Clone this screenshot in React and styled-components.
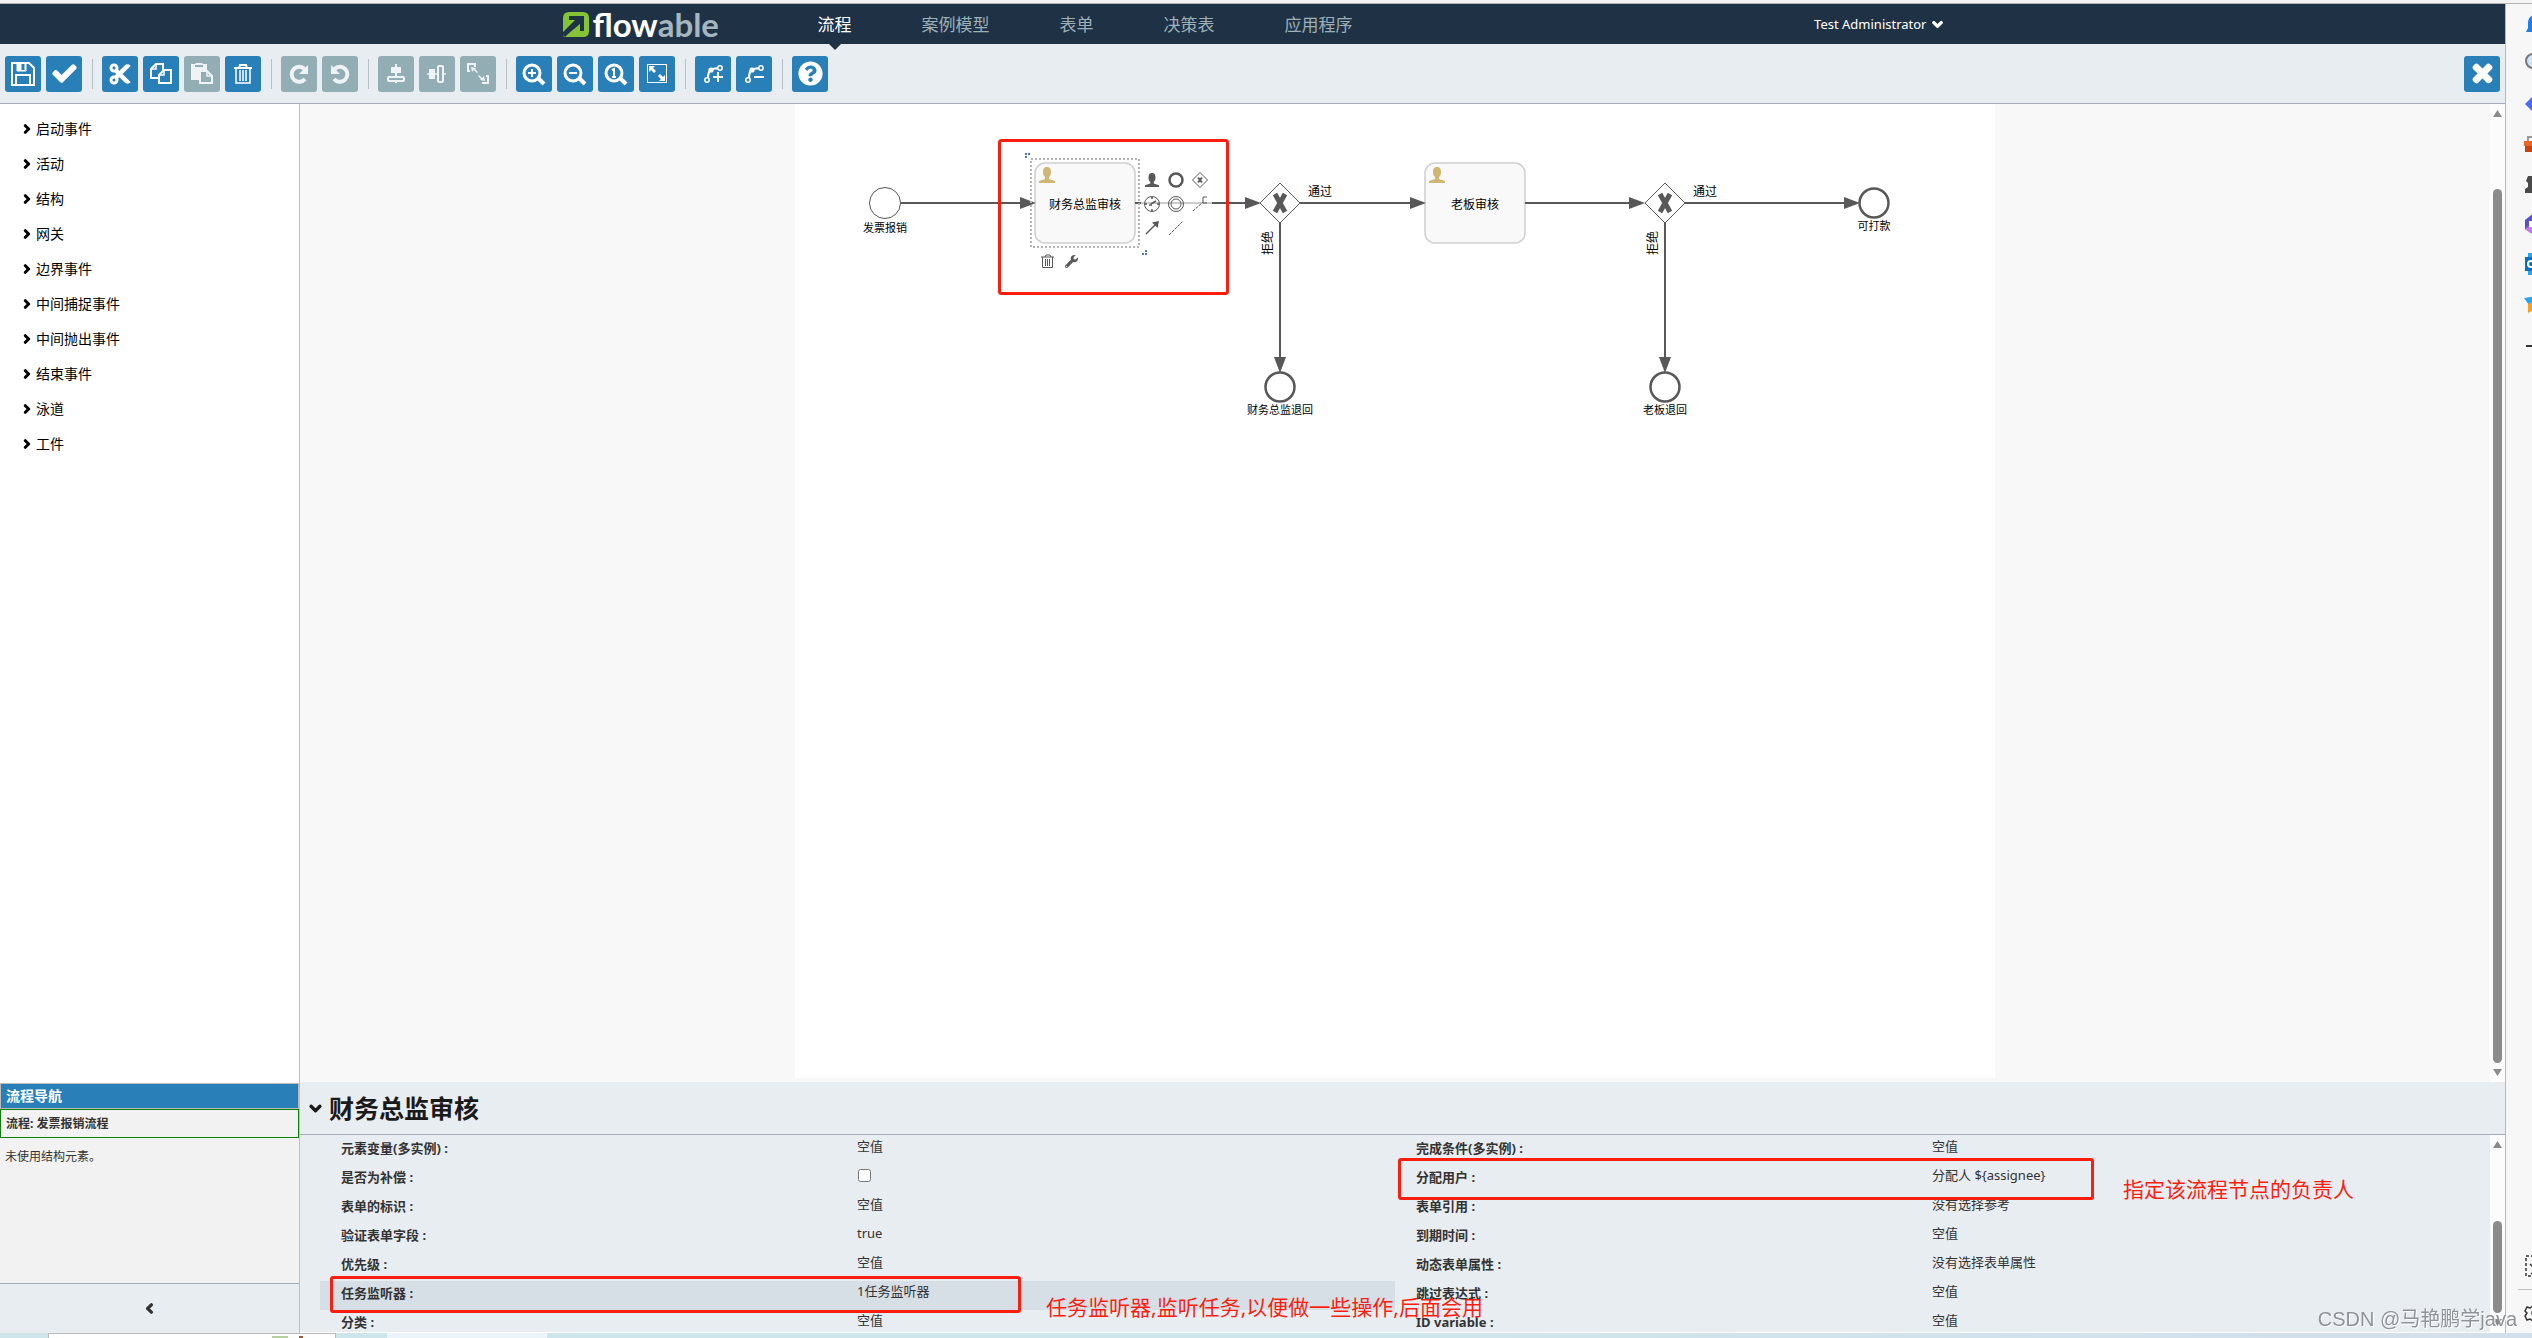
//LIBRARIES
import React from 'react';
import styled, { createGlobalStyle } from 'styled-components';
import {
  FaCheck,
  FaChevronDown,
  FaChevronLeft,
  FaChevronRight,
  FaCut,
  FaQuestionCircle,
  FaTimes,
  FaWrench,
} from 'react-icons/fa';

const GlobalStyle = createGlobalStyle`
  * {
    box-sizing: border-box;
  }

  body {
    margin: 0;
    overflow: hidden;
    color: #333;
    font-family: "Noto Sans", "Noto Sans CJK SC", sans-serif;
    font-size: 14px;
  }

  button {
    border: 0;
    padding: 0;
    background: none;
    color: inherit;
    font: inherit;
    cursor: pointer;
  }

  svg {
    display: block;
    flex: none;
    overflow: visible;
  }
`;

const Screen = styled.div`
  display: flex;
  flex-direction: column;
  height: 100vh;
  background: #f7f7f7;
`;

const WindowTop = styled.div`
  height: 4px;
  flex: none;
  background: #f3f3f3;
  border-bottom: 1px solid #b4b4b4;
`;

const Window = styled.div`
  display: flex;
  flex: 1;
  min-height: 0;
`;

const Editor = styled.div`
  display: flex;
  flex-direction: column;
  flex: 1;
  min-width: 0;
`;

/* header */
const Header = styled.header`
  height: 40px;
  flex: none;
  background: #1f3245;
`;

const HeaderInner = styled.div`
  display: flex;
  align-items: center;
  max-width: 1380px;
  height: 100%;
  margin: 0 auto;
`;

const Logo = styled.a`
  display: flex;
  align-items: center;
  gap: 4px;
  width: 220px;
  color: #fff;
  font-family: Lato, "Liberation Sans", sans-serif;
  font-size: 33px;
  font-weight: 700;
  line-height: 32px;
  text-decoration: none;

  em {
    color: #a4b6bf;
    font-style: normal;
  }
`;

const Nav = styled.nav`
  display: flex;
  flex: 1;
  height: 100%;
`;

const NavLink = styled.a`
  position: relative;
  padding: 0 35px;
  color: ${(props) => (props.$active ? '#fff' : '#9db0b9')};
  font-size: 17px;
  line-height: 42px;
  text-decoration: none;

  &::after {
    content: "";
    display: ${(props) => (props.$active ? 'block' : 'none')};
    position: absolute;
    top: 100%;
    left: calc(50% - 6px);
    border: 6px solid transparent;
    border-top-color: #1f3245;
    border-bottom: 0;
  }
`;

const UserMenu = styled.button`
  display: flex;
  align-items: center;
  gap: 5px;
  color: #fff;
  font-size: 13px;
`;

/* toolbar */
const Toolbar = styled.div`
  display: flex;
  align-items: center;
  gap: 5px;
  height: 60px;
  flex: none;
  padding: 0 5px;
  background: #e8edf1;
  border-bottom: 1px solid #a4acb9;
`;

const ToolButton = styled.button`
  display: flex;
  align-items: center;
  justify-content: center;
  width: 36px;
  height: 36px;
  border-radius: 3px;
  background: ${(props) => (props.disabled ? '#93adb4' : '#2980b9')};
  color: ${(props) => (props.disabled ? '#eef3f5' : '#fff')};
`;

const ToolDivider = styled.span`
  width: 1px;
  height: 30px;
  margin: 0 4px 0 5px;
  background: #b9c1c8;
`;

const Spacer = styled.span`
  flex: 1;
`;

/* columns */
const Workspace = styled.div`
  display: flex;
  flex: 1;
  min-height: 0;
`;

const Sidebar = styled.aside`
  display: flex;
  flex-direction: column;
  width: 300px;
  flex: none;
  background: #fff;
  border-right: 1px solid #c0c0c4;
`;

const Palette = styled.ul`
  flex: 1;
  margin: 0;
  padding: 7px 0 0 22px;
  list-style: none;
`;

const PaletteItem = styled.button`
  display: flex;
  align-items: center;
  gap: 4px;
  height: 35px;
  color: #000;
  line-height: 18px;
`;

const Navigator = styled.section`
  height: 200px;
  background: #f2f2f2;
  color: #333;
  font-size: 12px;
`;

const NavigatorTitle = styled.h2`
  height: 26px;
  margin: 0;
  padding: 0 5px;
  border: 1px solid #bbb;
  background: #2980b9;
  color: #fff;
  font-size: 14px;
  line-height: 24px;
`;

const NavigatorProcess = styled.div`
  height: 29px;
  padding: 0 5px;
  border: 1px solid #0a800a;
  font-weight: 700;
  line-height: 27px;
`;

const NavigatorText = styled.p`
  margin: 0;
  padding: 9px 5px;
  line-height: 20px;
`;

const CollapseButton = styled.button`
  display: flex;
  align-items: center;
  justify-content: center;
  height: 50px;
  border-top: 1px solid #a4acb9;
  background: #e8edf1;
`;

const Content = styled.main`
  display: flex;
  flex-direction: column;
  flex: 1;
  min-width: 0;
`;

const CanvasArea = styled.div`
  display: flex;
  flex: 1;
  min-height: 0;
  background: #f8f8f8;
`;

const CanvasScroll = styled.div`
  flex: 1;
  min-width: 0;
  padding-bottom: 4px;
`;

const Paper = styled.div`
  width: 1200px;
  height: 100%;
  margin: 0 auto;
  background: #fff;
`;

/* scrollbar */
const ScrollTrack = styled.div`
  display: flex;
  flex-direction: column;
  align-items: center;
  justify-content: space-between;
  width: 15px;
  flex: none;
  padding: 6px 0;
  background: #fcfcfc;
`;

const ScrollRail = styled.div`
  display: flex;
  flex: 1;
  padding: 5px 0;
  align-items: flex-end;
`;

const ScrollThumb = styled.div`
  width: 9px;
  height: ${(props) => props.$size};
  border-radius: 5px;
  background: #8b8b8b;
`;

/* properties */
const Properties = styled.section`
  display: flex;
  flex-direction: column;
  height: 251px;
  flex: none;
  background: #e8edf1;
  border-bottom: 1px solid #fff;
`;

const PropertiesHeader = styled.button`
  display: flex;
  align-items: center;
  gap: 7px;
  height: 53px;
  flex: none;
  padding-left: 9px;
  border-bottom: 1px solid #a4acb9;
  color: #1a1a1a;
`;

const PropertiesTitle = styled.h1`
  margin: 0;
  font-size: 25px;
  line-height: 32px;
`;

const PropertiesBody = styled.div`
  display: flex;
  flex: 1;
  min-height: 0;
`;

const PropertiesGrid = styled.div`
  position: relative;
  display: grid;
  grid-template-columns: 1fr 1fr;
  grid-auto-rows: 29px;
  flex: 1;
  height: 100%;
  padding: 1px 20px 0;
  overflow: hidden;
`;

const Property = styled.div`
  display: grid;
  grid-template-columns: 1fr 1fr;
  padding-left: 21px;
  background: ${(props) => (props.$selected ? '#d6dee6' : 'transparent')};
  font-size: 13px;
  line-height: 20px;
`;

const PropertyName = styled.label`
  padding-top: 2px;
  font-weight: 700;
`;

const PropertyValue = styled.span`
  margin-left: -11px;
`;

const PropertyCheckbox = styled.input`
  width: 13px;
  height: 13px;
  margin: 4px 0 0 -10px;
`;

/* red notes over the page */
const Highlight = styled.div`
  position: absolute;
  border: 3px solid #fd1e10;
  border-radius: 3px;
  pointer-events: none;
`;

const ListenerHighlight = styled(Highlight)`
  top: 141px;
  left: 30px;
  width: 691px;
  height: 37px;
`;

const AssigneeHighlight = styled(Highlight)`
  top: 23px;
  left: calc(50% + 3px);
  width: 696px;
  height: 42px;
`;

const Note = styled.span`
  position: absolute;
  color: #fd1e10;
  font-size: 21px;
  line-height: 30px;
  white-space: nowrap;
`;

const ListenerNote = styled(Note)`
  top: 157px;
  left: 746px;
`;

const AssigneeNote = styled(Note)`
  top: 39px;
  left: calc(50% + 728px);
`;

const Watermark = styled.div`
  position: fixed;
  right: 15px;
  bottom: 3px;
  color: #8f9498;
  font-family: "Liberation Sans", "Noto Sans CJK SC", sans-serif;
  font-size: 20px;
  line-height: 32px;
  text-shadow: 1px 1px 0 #fff;
  white-space: nowrap;
`;

/* browser side strip */
const BrowserBar = styled.aside`
  display: flex;
  flex-direction: column;
  width: 27px;
  flex: none;
  overflow: hidden;
  border-left: 1px solid #b8b8b8;
  background: #f7f7f7;
`;

const BrowserButton = styled.button`
  display: flex;
  align-items: center;
  height: 40px;
  flex: none;
  padding-left: 18px;
`;

const BrowserRule = styled.hr`
  width: 100%;
  margin: 3px 0 3px 12px;
  border: 0;
  border-top: 1px solid #c0c0c0;
`;

const Taskbar = styled.div`
  display: flex;
  height: 5px;
  flex: none;
  padding-left: 48px;
  background: linear-gradient(90deg, #cfe5ec 0%, #cfe5ec 55%, #d4dfec 100%);
`;

const TaskWindow = styled.div`
  display: flex;
  align-items: flex-end;
  justify-content: flex-end;
  gap: 11px;
  width: 288px;
  padding-right: 32px;
  border: 1px solid #bbb;
  border-bottom: 0;
  background: #fff;
`;

const TaskMark = styled.span`
  width: ${(props) => (props.$wide ? '16px' : '4px')};
  height: 2px;
  background: ${(props) => (props.$wide ? '#b5cfa0' : '#9a5c3c')};
`;

const TaskPreview = styled.div`
  width: 160px;
  margin-left: 51px;
  background: #eaf4f9;
`;

const ToolIcon = ({ children }) => (
  <svg width="36" height="36" viewBox="0 0 36 36" fill="none" stroke="currentColor" strokeWidth="2" aria-hidden="true">
    {children}
  </svg>
);

const Lens = ({ children }) => (
  <ToolIcon>
    <circle cx="16" cy="17" r="8" strokeWidth="3" />
    <path d="M22 22l6 6" strokeWidth="4" />
    {children}
  </ToolIcon>
);

const bendLine = (
  <>
    <circle cx="12" cy="24" r="2.2" strokeWidth="1.5" />
    <circle cx="25" cy="12" r="2.2" strokeWidth="1.5" />
    <circle cx="16" cy="14" r="2.6" fill="currentColor" stroke="none" />
    <path d="M13 22c0-4 1-7 3-8 2-2 5-1 7-2" />
  </>
);

const toolGroups = [
  [
    {
      label: '保存',
      icon: (
        <ToolIcon>
          <path d="M7 7h17l5 5v17H7z" />
          <path d="M11 29V19h14v10" />
          <path d="M12 7v8h9V7z" fill="currentColor" strokeWidth="1" />
          <path d="M18 8v6" stroke="#2980b9" strokeWidth="3" />
        </ToolIcon>
      ),
    },
    { label: '验证', icon: <FaCheck size={23} stroke="currentColor" strokeWidth="30" /> },
  ],
  [
    { label: '剪切', icon: <FaCut size={24} /> },
    {
      label: '复制',
      icon: (
        <ToolIcon>
          <path d="M16 22H8v-9l5-5h7v6" />
          <path d="M13 8v5H8" strokeWidth="1.5" />
          <path d="M16 27V19l5-5h7v13z" />
          <path d="M21 14v5h-5" strokeWidth="1.5" />
        </ToolIcon>
      ),
    },
    {
      label: '粘贴',
      disabled: true,
      icon: (
        <ToolIcon>
          <path d="M7 8h4l1-1h6l1 1h4v6h-7v10H7z" fill="currentColor" stroke="none" />
          <path d="M11 10h8" stroke="#93adb4" />
          <path d="M16 15h7l5 5v7H16z" fill="#93adb4" />
          <path d="M23 15v5h5" strokeWidth="1.5" />
        </ToolIcon>
      ),
    },
    {
      label: '删除',
      icon: (
        <ToolIcon>
          <path d="M9 12h18M14 12l1-3h6l1 3" />
          <path d="M11 12v15h14V12M15 14v11M18 14v11M21 14v11" strokeWidth="1.5" />
        </ToolIcon>
      ),
    },
  ],
  [
    {
      label: '重做',
      disabled: true,
      icon: (
        <ToolIcon>
          <path d="M24 23a7.5 7.5 0 1 1-.5-10" strokeWidth="4" />
          <path d="M27 9v9h-9z" fill="currentColor" stroke="none" />
        </ToolIcon>
      ),
    },
    {
      label: '撤销',
      disabled: true,
      icon: (
        <ToolIcon>
          <path d="M12 23a7.5 7.5 0 1 0 .5-10" strokeWidth="4" />
          <path d="M9 9v9h9z" fill="currentColor" stroke="none" />
        </ToolIcon>
      ),
    },
  ],
  [
    {
      label: '垂直对齐',
      disabled: true,
      icon: (
        <ToolIcon>
          <path d="M18 8v13M18 25v2" />
          <path d="M13 11h10v6H13z" fill="currentColor" stroke="none" />
          <rect x="10" y="21" width="16" height="4" rx="1" />
        </ToolIcon>
      ),
    },
    {
      label: '水平对齐',
      disabled: true,
      icon: (
        <ToolIcon>
          <path d="M8 18h11M24 18h3" strokeWidth="1.5" />
          <path d="M10 13h6v10h-6z" fill="currentColor" stroke="none" />
          <rect x="19" y="10" width="5" height="16" rx="1" />
        </ToolIcon>
      ),
    },
    {
      label: '相同大小',
      disabled: true,
      icon: (
        <ToolIcon>
          <path d="M10 15H8V8h7v3M22 27h6v-7h-2" />
          <path d="M11 11l5 1-1 1 3 3-1 1-3-3-2 2zM25 25l-5-1 1-1-3-3 1-1 3 3 2-2z" fill="currentColor" stroke="none" />
        </ToolIcon>
      ),
    },
  ],
  [
    { label: '放大', icon: <Lens><path d="M12 17h8M16 13v8" /></Lens> },
    { label: '缩小', icon: <Lens><path d="M12 17h8" /></Lens> },
    { label: '实际大小', icon: <Lens><path d="M14 14l2-1v8M14 21h4" /></Lens> },
    {
      label: '适应屏幕',
      icon: (
        <ToolIcon>
          <rect x="8.5" y="8.5" width="19" height="18" strokeWidth="1" />
          <path d="M10 10h6l-2 2 3 3-2 2-3-3-2 2zM26 25h-6l2-2-3-3 2-2 3 3 2-2z" fill="currentColor" stroke="none" />
        </ToolIcon>
      ),
    },
  ],
  [
    { label: '添加拐点', icon: <ToolIcon>{bendLine}<path d="M18 21h10M23 16v10" /></ToolIcon> },
    { label: '移除拐点', icon: <ToolIcon>{bendLine}<path d="M18 21h10" /></ToolIcon> },
  ],
  [{ label: '帮助', icon: <FaQuestionCircle size={25} /> }],
];

const navItems = ['流程', '案例模型', '表单', '决策表', '应用程序'];

const paletteItems = [
  '启动事件',
  '活动',
  '结构',
  '网关',
  '边界事件',
  '中间捕捉事件',
  '中间抛出事件',
  '结束事件',
  '泳道',
  '工件',
];

const properties = [
  { name: '元素变量(多实例)', value: '空值' },
  { name: '完成条件(多实例)', value: '空值' },
  { name: '是否为补偿', checkbox: true },
  { name: '分配用户', value: '分配人 ${assignee}' },
  { name: '表单的标识', value: '空值' },
  { name: '表单引用', value: '没有选择参考' },
  { name: '验证表单字段', value: 'true' },
  { name: '到期时间', value: '空值' },
  { name: '优先级', value: '空值' },
  { name: '动态表单属性', value: '没有选择表单属性' },
  { name: '任务监听器', value: '1任务监听器', selected: true },
  { name: '跳过表达式', value: '空值' },
  { name: '分类', value: '空值' },
  { name: 'ID variable', value: '空值' },
];

const browserIcons = [
  {
    label: '通知',
    icon: <path d="M12 3c-5 0-8 3-8 8v5l-2 4h20V11c0-5-4-8-10-8zM9 21h6v2H9z" fill="#1a7fe8" />,
  },
  {
    label: '搜索',
    icon: <circle cx="9" cy="9" r="7" fill="#cfe6f5" stroke="#777" strokeWidth="2" />,
  },
  { label: '购物', icon: <path d="M1 12L12 1v22z" fill="#4a6cf5" /> },
  {
    label: '工具',
    icon: <><path d="M4 9V5h14v4" fill="none" stroke="#999" strokeWidth="2" /><path d="M0 9h24v5H0z" fill="#e8662a" /><path d="M1 14h22v6H1z" fill="#c8430f" /></>,
  },
  { label: '游戏', icon: <path d="M4 4h9v6l-2 2v5h5v4H1v-4l3-2v-4L2 9z" fill="#4a4a4a" /> },
  {
    label: 'Microsoft 365',
    icon: <><path d="M1 8l9-7v22l-9-6z" fill="#5b52c8" /><path d="M1 17l9-6v12z" fill="#c77be8" /><path d="M5 9h5v6H5z" fill="#fff" /></>,
  },
  {
    label: 'Outlook',
    icon: <><path d="M4 1h18v22H4z" fill="#28a8ea" /><path d="M1 5h13v14H1z" fill="#0a6ec2" /><circle cx="7" cy="12" r="3" fill="none" stroke="#fff" strokeWidth="2" /></>,
  },
  {
    label: 'Drop',
    icon: <><path d="M0 6l20-3v8L5 13z" fill="#2aa7e8" /><path d="M4 12l6-3v9l-6 3z" fill="#f2a325" /></>,
  },
  { label: '添加', icon: <path d="M2 14h20M12 4v20" stroke="#333" strokeWidth="2" /> },
];

const BrowserIcon = ({ children }) => (
  <svg width="24" height="24" viewBox="0 0 24 24" aria-hidden="true">{children}</svg>
);

const Scrollbar = ({ size }) => (
  <ScrollTrack aria-hidden="true">
    <svg width="9" height="8" viewBox="0 0 9 8"><path d="M4.5 0L9 7H0z" fill="#8b8b8b" /></svg>
    <ScrollRail><ScrollThumb $size={size} /></ScrollRail>
    <svg width="9" height="8" viewBox="0 0 9 8"><path d="M0 1h9L4.5 8z" fill="#8b8b8b" /></svg>
  </ScrollTrack>
);

const UserShape = ({ x, y, size, color }) => (
  <svg x={x} y={y} width={size} height={size} viewBox="0 0 16 16">
    <path d="M8 0c3 0 4 2 4 5 0 2-.5 4-2 5v2l6 2v2H0v-2l6-2v-2C4.500 9 4 7 4 5c0-3 1-5 4-5z" fill={color} />
  </svg>
);

const Task = ({ x, name }) => (
  <g>
    <rect x={x} y="59" width="100" height="80" rx="10" fill="#f9f9f9" stroke="#cfcfcf" strokeWidth="1.5" />
    <UserShape x={x + 4} y={63} size={16} color="#d1b575" />
    <text x={x + 50} y="105" fontSize="12">{name}</text>
  </g>
);

const Gateway = ({ x }) => (
  <g>
    <path d={`M${x - 20} 99l20-20 20 20-20 20z`} fill="#fff" stroke="#585858" />
    <path d={`M${x - 5} 90l10 18M${x + 5} 90l-10 18`} stroke="#585858" strokeWidth="5" />
    <text x={x + 40} y="92" fontSize="12">通过</text>
    <text x={x - 12} y="139" fontSize="12" transform={`rotate(-90 ${x - 12} 139)`} dy="4">拒绝</text>
  </g>
);

const EndEvent = ({ x, y, name }) => (
  <g>
    <circle cx={x} cy={y} r="14.5" fill="#fff" stroke="#585858" strokeWidth="2.5" />
    <text x={x} y={y + 27} fontSize="11">{name}</text>
  </g>
);

const Flow = ({ d }) => (
  <path d={d} stroke="#585858" strokeWidth="2" fill="none" markerEnd="url(#arrow)" />
);

const Diagram = () => (
  <svg width="1200" height="400" viewBox="0 0 1200 400" textAnchor="middle" fill="#000">
    <defs>
      <marker id="arrow" markerUnits="userSpaceOnUse" markerWidth="16" markerHeight="12" refX="1" refY="6" orient="auto">
        <path d="M0 0l16 6-16 6z" fill="#585858" />
      </marker>
    </defs>

    <circle cx="90" cy="99" r="15.5" fill="#fff" stroke="#585858" />
    <text x="90" y="128" fontSize="11">发票报销</text>

    <Task x={240} name="财务总监审核" />
    <Task x={630} name="老板审核" />
    <Gateway x={485} />
    <Gateway x={870} />
    <EndEvent x={485} y={283} name="财务总监退回" />
    <EndEvent x={870} y={283} name="老板退回" />
    <EndEvent x={1079} y={99} name="可打款" />

    <Flow d="M106 99H226" />
    <Flow d="M505 99H616" />
    <Flow d="M730 99H835" />
    <Flow d="M890 99H1050" />
    <Flow d="M485 119V254" />
    <Flow d="M870 119V254" />
    <Flow d="M417 99H451" />
    <path d="M340 99h6" stroke="#585858" strokeWidth="2" />
    <path d="M346 99h71" stroke="#ccc" strokeWidth="2" />

    {/* selection frame */}
    <rect x="236" y="55" width="108" height="88" fill="none" stroke="#b4b4b4" strokeWidth="2" strokeDasharray="2 2" />
    <path d="M230 49h2v2h-2zM233 49h2v2h-2zM230 52h2v2h-2zM350 146h2v2h-2zM347 149h2v2h-2zM350 149h2v2h-2z" fill="#4a7cb5" />

    {/* quick menu */}
    <UserShape x={350} y={69} size={14} color="#585858" />
    <g fill="none" stroke="#585858">
      <circle cx="381" cy="76" r="6.5" strokeWidth="2.5" />
      <path d="M397.5 76l7.5-7.5 7.5 7.5-7.5 7.5z" />
      <path d="M403 73.5l4 5M407 73.5l-4 5" strokeWidth="2" />
      <circle cx="357" cy="100" r="7.5" />
      <path d="M356 100l5-3M354 101h3M357 93v2M357 105v2M350 100h2M362 100h2" strokeWidth="1.5" />
      <circle cx="381" cy="100" r="7.5" />
      <circle cx="381" cy="100" r="5" />
      <path d="M398 107l10-9" strokeDasharray="3 1" />
      <path d="M412 93h-4v6h4" />
      <path d="M351 130l9-9" strokeWidth="1.5" />
      <path d="M374 131l14-14" strokeDasharray="3 1" />
      <path d="M246 153h13M250 153l1-2h4l1 2" />
      <path d="M247.5 153v10.5h10V153M250.5 155v7M252.5 155v7M254.5 155v7" />
    </g>
    <path d="M364 117l-1.5 7-5.5-5.5z" fill="#585858" />
    <FaWrench x="270" y="151" size={13} color="#585858" />

    <rect x="204.5" y="36.5" width="228" height="153" rx="2" fill="none" stroke="#fd1e10" strokeWidth="3" />
  </svg>
);

const PropertyRow = ({ property, id }) => (
  <Property $selected={property.selected}>
    <PropertyName htmlFor={property.checkbox ? id : undefined}>{property.name} :</PropertyName>
    {property.checkbox
      ? <PropertyCheckbox id={id} type="checkbox" />
      : <PropertyValue>{property.value}</PropertyValue>}
  </Property>
);

const App = () => (
  <Screen>
    <GlobalStyle />
    <WindowTop />
    <Window>
      <Editor>
        <Header>
          <HeaderInner>
            <Logo href="#">
              <svg width="26" height="25" viewBox="0 0 26 25" aria-hidden="true">
                <path d="M6 0h14q6 0 6 6v13q0 6-6 6H4l-3 0-1-2V6q0-6 6-6z" fill="#84c436" />
                <path d="M6 4h15v15h-4v-7L5 22l-3 3-2-2v-3L12 8H6z" fill="#1f3245" />
                <path d="M0 14L9 8v2L0 20z" fill="#84c436" />
              </svg>
              <span>flow<em>able</em></span>
            </Logo>
            <Nav>
              {navItems.map((item, index) => (
                <NavLink key={item} href="#" $active={index === 0}>{item}</NavLink>
              ))}
            </Nav>
            <UserMenu>
              Test Administrator <FaChevronDown size={11} stroke="currentColor" strokeWidth="70" />
            </UserMenu>
          </HeaderInner>
        </Header>

        <Toolbar>
          {toolGroups.map((group, index) => (
            <React.Fragment key={group[0].label}>
              {index > 0 && <ToolDivider />}
              {group.map((tool) => (
                <ToolButton key={tool.label} aria-label={tool.label} disabled={tool.disabled}>
                  {tool.icon}
                </ToolButton>
              ))}
            </React.Fragment>
          ))}
          <Spacer />
          <ToolButton aria-label="关闭">
            <FaTimes size={25} stroke="currentColor" strokeWidth="50" />
          </ToolButton>
        </Toolbar>

        <Workspace>
          <Sidebar>
            <Palette>
              {paletteItems.map((item) => (
                <li key={item}>
                  <PaletteItem>
                    <FaChevronRight size={10} stroke="currentColor" strokeWidth="70" />
                    {item}
                  </PaletteItem>
                </li>
              ))}
            </Palette>
            <Navigator>
              <NavigatorTitle>流程导航</NavigatorTitle>
              <NavigatorProcess>流程: 发票报销流程</NavigatorProcess>
              <NavigatorText>未使用结构元素。</NavigatorText>
            </Navigator>
            <CollapseButton aria-label="收起">
              <FaChevronLeft size={11} stroke="currentColor" strokeWidth="70" />
            </CollapseButton>
          </Sidebar>

          <Content>
            <CanvasArea>
              <CanvasScroll>
                <Paper><Diagram /></Paper>
              </CanvasScroll>
              <Scrollbar size="93%" />
            </CanvasArea>

            <Properties>
              <PropertiesHeader>
                <FaChevronDown size={13} stroke="currentColor" strokeWidth="50" />
                <PropertiesTitle>财务总监审核</PropertiesTitle>
              </PropertiesHeader>
              <PropertiesBody>
                <PropertiesGrid>
                  {properties.map((property, index) => (
                    <PropertyRow key={property.name} property={property} id={`property-${index}`} />
                  ))}
                  <ListenerHighlight />
                  <AssigneeHighlight />
                  <ListenerNote>任务监听器,监听任务,以便做一些操作,后面会用</ListenerNote>
                  <AssigneeNote>指定该流程节点的负责人</AssigneeNote>
                </PropertiesGrid>
                <Scrollbar size="58%" />
              </PropertiesBody>
            </Properties>
          </Content>
        </Workspace>
      </Editor>

      <BrowserBar>
        {browserIcons.map((item) => (
          <BrowserButton key={item.label} aria-label={item.label}>
            <BrowserIcon>{item.icon}</BrowserIcon>
          </BrowserButton>
        ))}
        <Spacer />
        <BrowserButton aria-label="截图">
          <BrowserIcon>
            <path d="M10 2H2v20h6" fill="none" stroke="#333" strokeWidth="1.5" strokeDasharray="3 2" />
            <path d="M6 10l6 6M7 20l5-4" stroke="#333" strokeWidth="1.5" />
          </BrowserIcon>
        </BrowserButton>
        <BrowserRule />
        <BrowserButton aria-label="设置">
          <BrowserIcon>
            <path d="M10 2l-1 3-3 2-3-1-2 4 2 2-2 3 2 4 3-1 3 2 1 3h4" fill="none" stroke="#333" strokeWidth="1.5" />
            <circle cx="12" cy="12" r="4" fill="none" stroke="#333" strokeWidth="1.5" />
          </BrowserIcon>
        </BrowserButton>
      </BrowserBar>
    </Window>
    <Taskbar>
      <TaskWindow><TaskMark $wide /><TaskMark /></TaskWindow>
      <TaskPreview />
    </Taskbar>
    <Watermark>CSDN @马艳鹏学java</Watermark>
  </Screen>
);

export default App;
